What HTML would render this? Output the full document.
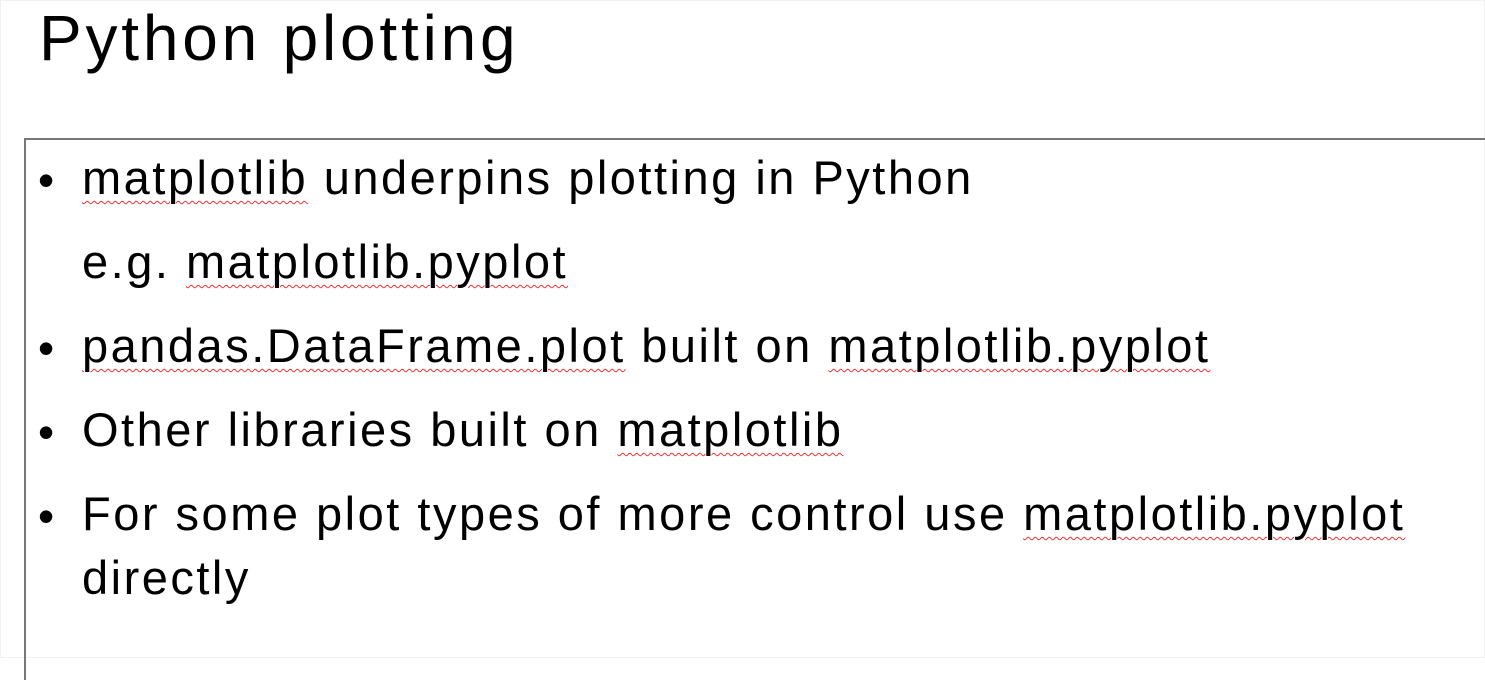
<!DOCTYPE html>
<html><head><meta charset="utf-8"><style>
html,body{margin:0;padding:0;background:#fff;}
body{width:1485px;height:658px;position:relative;overflow:hidden;font-family:"Liberation Sans","DejaVu Sans",sans-serif;color:#000;}
.frame{position:absolute;left:0;top:0;width:1483px;height:656px;border:1px solid #f0f0f0;}
h1{position:absolute;left:39px;top:-4px;margin:0;font-weight:normal;font-size:64px;line-height:84px;letter-spacing:3.8px;}
.box{position:absolute;left:24px;top:138px;width:1470px;height:540px;border-left:2px solid #777;border-top:2px solid #777;}
.l{position:absolute;left:82px;font-size:47px;line-height:60px;white-space:nowrap;letter-spacing:2.5px;}
.b{position:absolute;left:38px;font-size:46px;line-height:60px;}
u{text-decoration:underline wavy #e33;text-decoration-thickness:1px;text-underline-offset:6px;}
</style></head><body>
<div class="frame"></div>
<h1>Python plotting</h1>
<div class="box"></div>
<div class="b" style="top:150px">•</div>
<div class="l" style="top:148px"><u>matplotlib</u> underpins plotting in Python</div>
<div class="l" style="top:232px">e.g. <u>matplotlib.pyplot</u></div>
<div class="b" style="top:318px">•</div>
<div class="l" style="top:316px"><u>pandas.DataFrame.plot</u> built on <u>matplotlib.pyplot</u></div>
<div class="b" style="top:402px">•</div>
<div class="l" style="top:400px">Other libraries built on <u>matplotlib</u></div>
<div class="b" style="top:486px">•</div>
<div class="l" style="top:484px">For some plot types of more control use <u>matplotlib.pyplot</u></div>
<div class="l" style="top:548px">directly</div>
</body></html>
